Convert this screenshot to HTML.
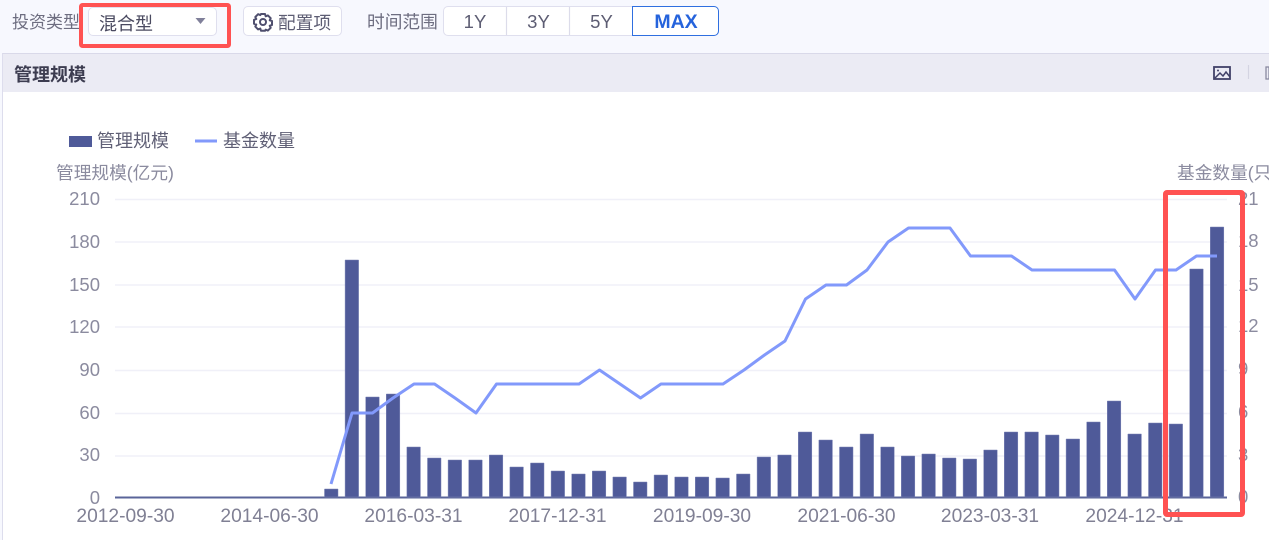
<!DOCTYPE html>
<html lang="zh">
<head>
<meta charset="utf-8">
<title>管理规模</title>
<style>
html,body{margin:0;padding:0;width:1269px;height:540px;overflow:hidden;background:#f7f8fe}
body{font-family:"Liberation Sans","Noto Sans CJK SC",sans-serif;color:#5d5d73}
#p{position:absolute;left:0;top:0;width:1269px;height:540px;filter:blur(0.35px)}
.a{position:absolute;white-space:nowrap;line-height:24px}
.box{position:absolute;box-sizing:border-box;background:#fff;border:1px solid #dfdfee;border-radius:5px}
svg{position:absolute;left:0;top:0}
</style>
</head>
<body>
<div id="p">
<div class="a" style="left:12px;top:11px;font-size:17px;color:#6d6d80">投资类型</div>
<div class="box" style="left:88px;top:7px;width:129px;height:29px"></div>
<div class="a" style="left:99px;top:12px;font-size:18px;color:#4a4a60">混合型</div>
<div class="box" style="left:243px;top:6px;width:99px;height:30px"></div>
<div class="a" style="left:278px;top:11px;font-size:17.7px">配置项</div>
<div class="a" style="left:367px;top:10px;font-size:17.7px;color:#6d6d80">时间范围</div>
<div class="box" style="left:443px;top:6px;width:276px;height:30px"></div>
<div class="a" style="left:443px;top:10px;width:64px;text-align:center;font-size:18.5px">1Y</div>
<div class="a" style="left:507px;top:10px;width:63px;text-align:center;font-size:18.5px">3Y</div>
<div class="a" style="left:570px;top:10px;width:63px;text-align:center;font-size:18.5px">5Y</div>
<div class="box" style="left:632px;top:6px;width:87px;height:30px;border:1.3px solid #2f6fe0;border-radius:0 5px 5px 0"></div>
<div class="a" style="left:632px;top:10px;width:88px;text-align:center;font-size:19.5px;font-weight:bold;color:#2563dc">MAX</div>
<div style="position:absolute;left:2px;top:53px;width:1267px;height:487px;box-sizing:border-box;border-left:1px solid #dddded;border-top:1px solid #d9d9e9;background:#fff"></div>
<div style="position:absolute;left:3px;top:54px;width:1266px;height:38px;background:#ebebf4"></div>
<div class="a" style="left:14px;top:63px;font-size:18px;font-weight:bold;color:#3c3c50">管理规模</div>
<svg width="1269" height="540" viewBox="0 0 1269 540" fill="none">
<path d="M195.5 18h10l-5 6z" fill="#80809a"/>
<g transform="translate(263,22)" stroke="#4f4f6e" stroke-width="2"><circle r="3"/><path d="M-2-8h4l.7 2.3 2.2-.9 2.8 2.8-1 2.1 2.3.7v4l-2.3.7 1 2.1-2.8 2.8-2.2-.9L2 8.8h-4l-.7-2.3-2.2.9-2.8-2.8 1-2.1-2.3-.7v-4l2.3-.7-1-2.1 2.800-2.800 2.200.9z" stroke-linejoin="round"/></g>
<path d="M506.5 7v28M569.5 7v28" stroke="#dcdcea" stroke-width="1.2"/>
<rect x="1214" y="67" width="16" height="12" stroke="#414168" stroke-width="1.8"/>
<path d="M1215 78l5-5 3 3 3-4 4 5" stroke="#414168" stroke-width="1.5"/>
<circle cx="1218" cy="70.500" r="1" fill="#414168"/>
<path d="M1248.500 65v14" stroke="#d4d4e2" stroke-width="1.2"/>
<rect x="1266" y="67" width="3" height="12" stroke="#8a8aa0" stroke-width="1.3"/>
<rect x="69" y="136" width="23" height="11" fill="#4f5a99"/>
<path d="M195 141h22" stroke="#8299fb" stroke-width="3"/>
<path d="M115 199.500H1227M115 242H1227M115 285H1227M115 327H1227M115 370.500H1227M115 413.500H1227M115 456H1227" stroke="#f0f0f8" stroke-width="1.5"/>
<path d="M115 497.500H1227" stroke="#5a6499" stroke-width="2"/>
<path fill="#4f5a99" stroke="#7b84b5" stroke-width="0.5" d="M324.500 489h13.500V497h-13.500zM345.100 260h13.500V497h-13.500zM365.700 397h13.500V497h-13.500zM386.300 394h13.500V497h-13.500zM406.900 447h13.500V497h-13.500zM427.500 458h13.500V497h-13.500zM448.100 460h13.500V497h-13.500zM468.700 460h13.500V497h-13.500zM489.300 455h13.500V497h-13.500zM509.900 467h13.500V497h-13.500zM530.500 463h13.500V497h-13.500zM551.100 471h13.500V497h-13.500zM571.700 474h13.500V497h-13.500zM592.300 471h13.500V497h-13.500zM612.900 477h13.500V497h-13.500zM633.500 482h13.500V497h-13.500zM654.100 475h13.500V497h-13.500zM674.700 477h13.500V497h-13.500zM695.300 477h13.500V497h-13.500zM715.900 478h13.500V497h-13.500zM736.500 474h13.500V497h-13.500zM757.100 457h13.500V497h-13.500zM777.700 455h13.500V497h-13.500zM798.300 432h13.500V497h-13.500zM818.900 440h13.500V497h-13.500zM839.500 447h13.500V497h-13.500zM860.100 434h13.500V497h-13.500zM880.700 447h13.500V497h-13.500zM901.300 456h13.500V497h-13.500zM921.900 454h13.500V497h-13.500zM942.500 458h13.500V497h-13.500zM963.100 459h13.500V497h-13.500zM983.700 450h13.500V497h-13.500zM1004.300 432h13.500V497h-13.500zM1024.900 432h13.500V497h-13.500zM1045.500 435h13.500V497h-13.500zM1066.100 439h13.500V497h-13.500zM1086.700 422h13.500V497h-13.500zM1107.300 401h13.500V497h-13.500zM1127.900 434h13.500V497h-13.500zM1148.500 423h13.500V497h-13.500zM1169.100 424h13.500V497h-13.500zM1189.700 269h13.500V497h-13.500zM1210.300 227h13.500V497h-13.500z"/>
<polyline stroke="#8299fb" stroke-width="3" stroke-linejoin="round" points="331,484 352,413 372.500,413 393,398 414,384 434.500,384 455,398 476,413 496.500,384 579,384 599.500,370 620,384 640.500,398 661,384 723,384 744,370 764.500,355 785,341 805.500,299 826,285 846.500,285 867,270 888,242 908.500,228 950,228 970.500,256 1011.500,256 1032,270 1114.500,270 1135,299 1155.500,270 1176,270 1196.500,256 1217,256"/>
<g font-family="'Liberation Sans','Noto Sans CJK SC',sans-serif" fill="#8b8b9f">
<text x="97" y="147" font-size="18" fill="#5f5f75">管理规模</text>
<text x="223" y="147" font-size="18" fill="#5f5f75">基金数量</text>
<text x="56" y="179" font-size="17.7">管理规模(亿元)</text>
<text x="1177" y="179" font-size="17.7">基金数量(只)</text>
<g font-size="18.5" text-anchor="end"><text x="100" y="205">210</text><text x="100" y="248">180</text><text x="100" y="291">150</text><text x="100" y="333">120</text><text x="100" y="376">90</text><text x="100" y="419">60</text><text x="100" y="461">30</text><text x="100" y="504">0</text></g>
<g font-size="18.5"><text x="1238" y="205">21</text><text x="1238" y="247">18</text><text x="1238" y="291">15</text><text x="1238" y="332">12</text><text x="1238" y="375">9</text><text x="1238" y="418">6</text><text x="1238" y="461">3</text><text x="1238" y="503">0</text></g>
<g font-size="19.2" text-anchor="middle" fill="#808094"><text x="125.500" y="522">2012-09-30</text><text x="269.500" y="522">2014-06-30</text><text x="413.500" y="522">2016-03-31</text><text x="557.500" y="522">2017-12-31</text><text x="702" y="522">2019-09-30</text><text x="846.500" y="522">2021-06-30</text><text x="990" y="522">2023-03-31</text><text x="1134.500" y="522">2024-12-31</text></g>
</g>
<rect x="81" y="5" width="148" height="41" rx="1.5" stroke="#ff5252" stroke-width="4"/>
<rect x="1165.500" y="192.500" width="77" height="322" rx="1.5" stroke="#ff5252" stroke-width="5"/>
</svg>
</div>
</body>
</html>
